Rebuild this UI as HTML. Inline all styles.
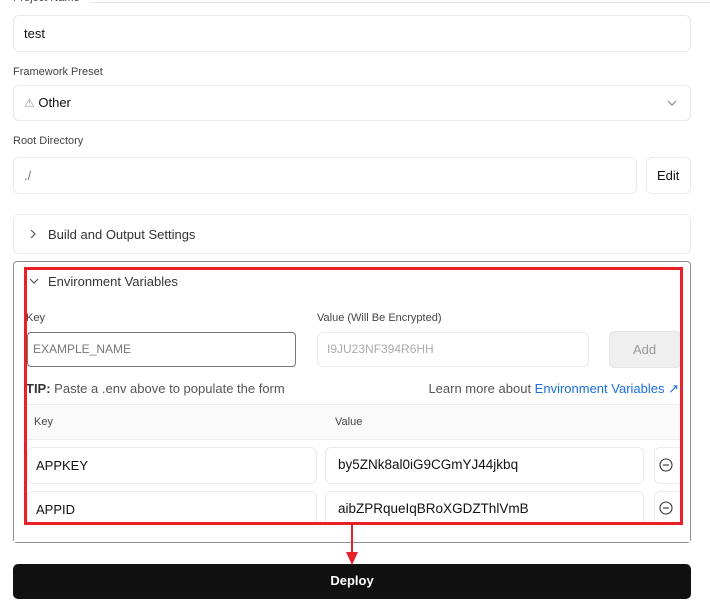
<!DOCTYPE html>
<html><head><style>
*{box-sizing:border-box;margin:0;padding:0}
body{width:710px;height:604px;background:#fff;position:relative;overflow:hidden;font-family:"Liberation Sans",Arial,sans-serif;color:#111}
.a{position:absolute}
.box{position:absolute;border:1px solid #ebebeb;border-radius:6px;background:#fff}
.lbl{position:absolute;font-size:11px;color:#444}
.t{position:absolute;font-size:13px}
</style></head><body>
<div class="a" style="left:90px;top:2px;width:620px;height:1px;background:#e4e4e4"></div>
<div class="lbl" style="left:13px;top:-8px;background:#fff;padding-right:4px">Project Name</div>
<div class="box" style="left:13px;top:15px;width:678px;height:37px"></div>
<div class="t" style="left:24px;top:26px">test</div>
<div class="lbl" style="left:13px;top:66px">Framework Preset</div>
<div class="box" style="left:13px;top:85px;width:678px;height:36px"></div>
<div class="t" style="left:24px;top:95px"><span style="color:#999;font-size:12px">⚠</span> Other</div>
<svg class="a" style="left:666px;top:98px" width="12" height="10"><path d="M2 3l4 4 4-4" fill="none" stroke="#888" stroke-width="1.2"/></svg>
<div class="lbl" style="left:13px;top:135px">Root Directory</div>
<div class="box" style="left:13px;top:157px;width:624px;height:37px"></div>
<div class="t" style="left:24px;top:168px;color:#777">./</div>
<div class="box" style="left:646px;top:157px;width:45px;height:37px"></div>
<div class="t" style="left:657px;top:168px">Edit</div>
<div class="box" style="left:13px;top:214px;width:678px;height:40px"></div>
<svg class="a" style="left:28px;top:228px" width="10" height="12"><path d="M3 2l4 4-4 4" fill="none" stroke="#555" stroke-width="1.2"/></svg>
<div class="t" style="left:48px;top:227px;color:#333">Build and Output Settings</div>
<div class="a" style="left:13px;top:261px;width:678px;height:282px;border:1px solid #8a8a8a;border-radius:4px"></div>
<svg class="a" style="left:28px;top:276px" width="12" height="10"><path d="M2 3l4 4 4-4" fill="none" stroke="#555" stroke-width="1.2"/></svg>
<div class="t" style="left:48px;top:274px;color:#333">Environment Variables</div>
<div class="lbl" style="left:26px;top:312px">Key</div>
<div class="lbl" style="left:317px;top:312px">Value (Will Be Encrypted)</div>
<div class="a" style="left:27px;top:332px;width:269px;height:35px;border:1px solid #777;border-radius:4px"></div>
<div class="t" style="left:33px;top:342px;color:#777;font-size:12px">EXAMPLE_NAME</div>
<div class="box" style="left:317px;top:332px;width:272px;height:35px"></div>
<div class="t" style="left:327px;top:342px;color:#aaa;font-size:12px">I9JU23NF394R6HH</div>
<div class="a" style="left:609px;top:331px;width:72px;height:37px;background:#efefef;border-radius:5px;border:1px solid #e6e6e6"></div>
<div class="t" style="left:633px;top:342px;color:#999">Add</div>
<div class="t" style="left:26px;top:381px;color:#555"><b style="color:#333">TIP:</b> Paste a .env above to populate the form</div>
<div class="t" style="right:31px;top:381px;color:#555;white-space:nowrap">Learn more about <span style="color:#1a6fe0">Environment Variables ↗</span></div>
<div class="a" style="left:27px;top:404px;width:654px;height:36px;background:#fafafa;border-top:1px solid #eee;border-bottom:1px solid #eee"></div>
<div class="lbl" style="left:34px;top:416px">Key</div>
<div class="lbl" style="left:335px;top:416px">Value</div>
<div class="box" style="left:27px;top:447px;width:290px;height:37px"></div>
<div class="t" style="left:36px;top:458px">APPKEY</div>
<div class="box" style="left:325px;top:447px;width:319px;height:37px"></div>
<div class="t" style="left:338px;top:457px;font-size:13.5px">by5ZNk8al0iG9CGmYJ44jkbq</div>
<div class="box" style="left:654px;top:447px;width:30px;height:37px"></div>
<svg class="a" style="left:659px;top:458px" width="14" height="14"><circle cx="7" cy="7" r="6" fill="none" stroke="#333" stroke-width="1.1"/><path d="M4 7h6" stroke="#333" stroke-width="1.1"/></svg>
<div class="box" style="left:27px;top:491px;width:290px;height:37px"></div>
<div class="t" style="left:36px;top:502px">APPID</div>
<div class="box" style="left:325px;top:491px;width:319px;height:37px"></div>
<div class="t" style="left:338px;top:501px;font-size:13.5px">aibZPRqueIqBRoXGDZThlVmB</div>
<div class="box" style="left:654px;top:491px;width:30px;height:37px"></div>
<svg class="a" style="left:659px;top:501px" width="14" height="14"><circle cx="7" cy="7" r="6" fill="none" stroke="#333" stroke-width="1.1"/><path d="M4 7h6" stroke="#333" stroke-width="1.1"/></svg>
<div class="a" style="left:14px;top:524px;width:676px;height:18px;background:#fff"></div>
<div class="a" style="left:681px;top:266px;width:9px;height:260px;background:#fff"></div>
<div class="a" style="left:24px;top:267px;width:659px;height:258px;border:3px solid #e8202a"></div>
<div class="a" style="left:13px;top:564px;width:678px;height:35px;background:#111;border-radius:5px"></div>
<div class="t" style="left:0;top:573px;width:704px;text-align:center;color:#fff;font-weight:bold;font-size:13px">Deploy</div>
<div class="a" style="left:351px;top:525px;width:2px;height:30px;background:#e8202a"></div>
<svg class="a" style="left:346px;top:552px" width="12" height="14"><path d="M0 0h12L6 13z" fill="#e8202a"/></svg>
</body></html>
